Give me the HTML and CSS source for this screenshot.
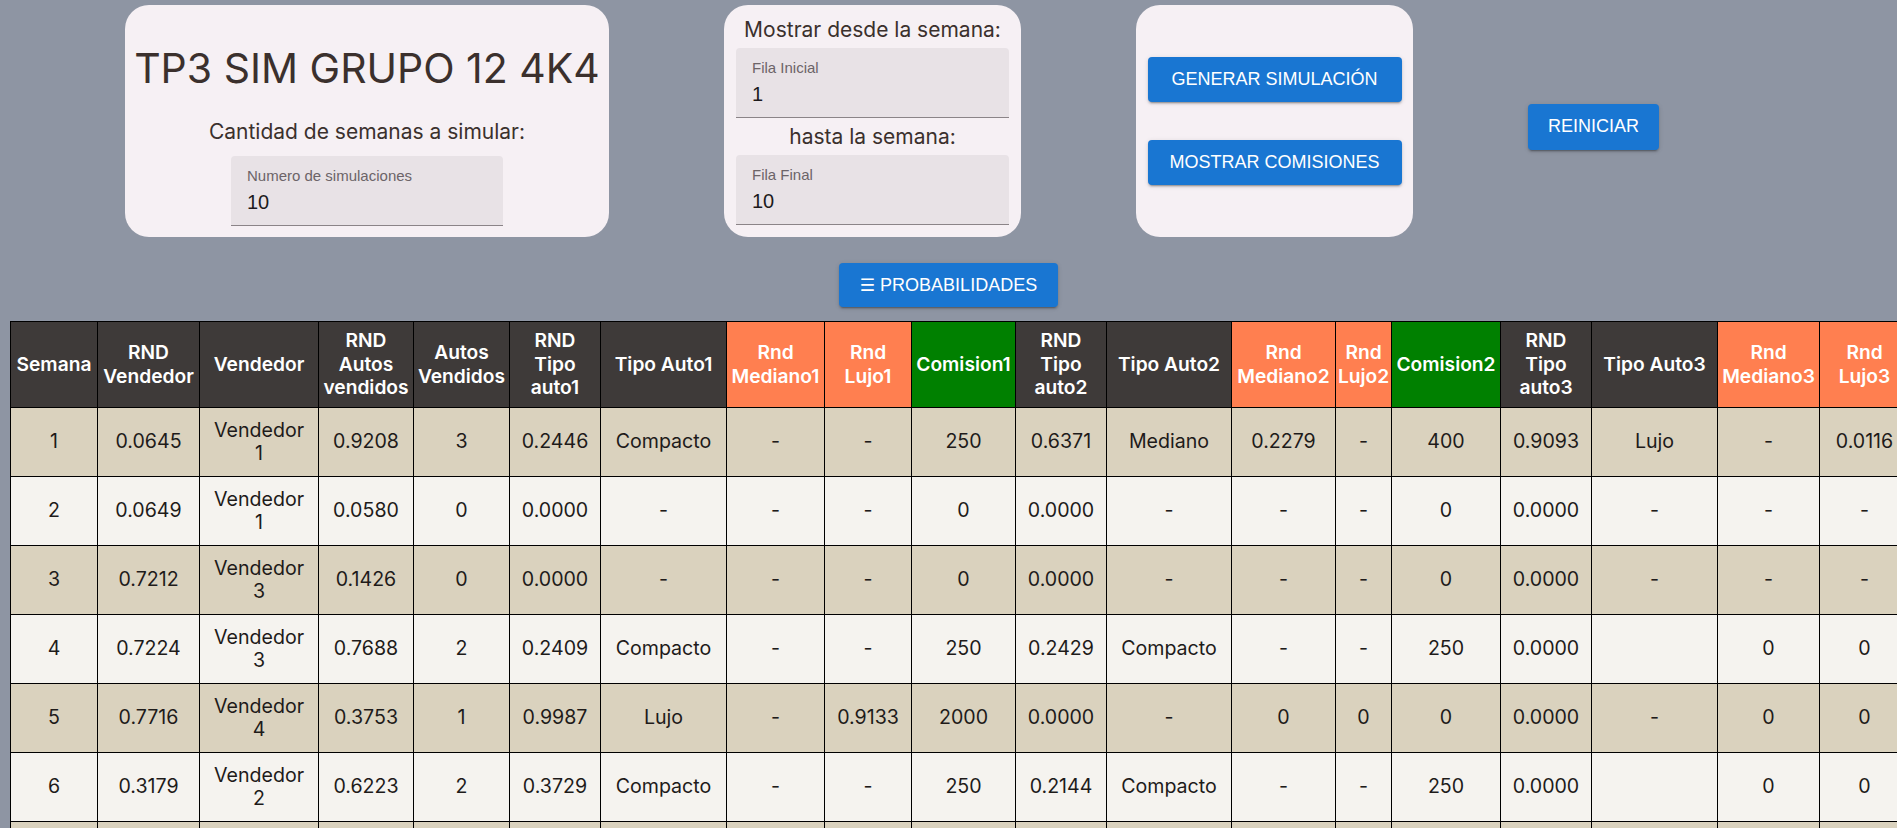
FILE: index.html
```html
<!DOCTYPE html>
<html lang="es">
<head>
<meta charset="utf-8">
<title>TP3 SIM GRUPO 12 4K4</title>
<link rel="stylesheet" href="styles.css">
</head>
<body>
<div class="top">
  <section class="card card-main">
    <h1 class="title">TP3 SIM GRUPO 12 4K4</h1>
    <p class="label label-sims">Cantidad de semanas a simular:</p>
    <div class="field field-sims">
      <span class="field-label">Numero de simulaciones</span>
      <span class="field-value">10</span>
    </div>
  </section>
  <section class="card card-range">
    <p class="label label-from">Mostrar desde la semana:</p>
    <div class="field">
      <span class="field-label">Fila Inicial</span>
      <span class="field-value">1</span>
    </div>
    <p class="label label-to">hasta la semana:</p>
    <div class="field">
      <span class="field-label">Fila Final</span>
      <span class="field-value">10</span>
    </div>
  </section>
  <section class="card card-actions">
    <button class="btn btn-wide">GENERAR SIMULACIÓN</button>
    <button class="btn btn-wide">MOSTRAR COMISIONES</button>
  </section>
  <div class="reset">
    <button class="btn btn-reset">REINICIAR</button>
  </div>
</div>
<div class="prob-row">
  <button class="btn btn-prob"><span class="menu-glyph">☰</span> PROBABILIDADES</button>
</div>
<div class="table-wrap">
  <table class="sim">
    <colgroup>
      <col class="w-sem"><col class="w-rndv"><col class="w-vend"><col class="w-rnda"><col class="w-autos">
      <col class="w-rndt"><col class="w-tipo"><col class="w-med1"><col class="w-luj1"><col class="w-com1">
      <col class="w-rndt"><col class="w-tipo2"><col class="w-med2"><col class="w-luj2"><col class="w-com2">
      <col class="w-rndt"><col class="w-tipo"><col class="w-med3"><col class="w-luj3"><col class="w-com3"><col class="w-tot">
    </colgroup>
    <thead>
      <tr class="head-row">
        <th>Semana</th>
        <th>RND<br>Vendedor</th>
        <th>Vendedor</th>
        <th>RND<br>Autos<br>vendidos</th>
        <th>Autos<br>Vendidos</th>
        <th>RND<br>Tipo<br>auto1</th>
        <th>Tipo Auto1</th>
        <th class="h-rnd">Rnd<br>Mediano1</th>
        <th class="h-rnd">Rnd<br>Lujo1</th>
        <th class="h-com">Comision1</th>
        <th>RND<br>Tipo<br>auto2</th>
        <th>Tipo Auto2</th>
        <th class="h-rnd">Rnd<br>Mediano2</th>
        <th class="h-rnd">Rnd<br>Lujo2</th>
        <th class="h-com">Comision2</th>
        <th>RND<br>Tipo<br>auto3</th>
        <th>Tipo Auto3</th>
        <th class="h-rnd">Rnd<br>Mediano3</th>
        <th class="h-rnd">Rnd<br>Lujo3</th>
        <th class="h-com">Comision3</th>
        <th class="h-com">Comision<br>Total</th>
      </tr>
    </thead>
    <tbody>
      <tr><td>1</td><td>0.0645</td><td>Vendedor 1</td><td>0.9208</td><td>3</td><td>0.2446</td><td>Compacto</td><td>-</td><td>-</td><td>250</td><td>0.6371</td><td>Mediano</td><td>0.2279</td><td>-</td><td>400</td><td>0.9093</td><td>Lujo</td><td>-</td><td>0.0116</td><td>1000</td><td>1650</td></tr>
      <tr><td>2</td><td>0.0649</td><td>Vendedor 1</td><td>0.0580</td><td>0</td><td>0.0000</td><td>-</td><td>-</td><td>-</td><td>0</td><td>0.0000</td><td>-</td><td>-</td><td>-</td><td>0</td><td>0.0000</td><td>-</td><td>-</td><td>-</td><td>0</td><td>0</td></tr>
      <tr><td>3</td><td>0.7212</td><td>Vendedor 3</td><td>0.1426</td><td>0</td><td>0.0000</td><td>-</td><td>-</td><td>-</td><td>0</td><td>0.0000</td><td>-</td><td>-</td><td>-</td><td>0</td><td>0.0000</td><td>-</td><td>-</td><td>-</td><td>0</td><td>0</td></tr>
      <tr><td>4</td><td>0.7224</td><td>Vendedor 3</td><td>0.7688</td><td>2</td><td>0.2409</td><td>Compacto</td><td>-</td><td>-</td><td>250</td><td>0.2429</td><td>Compacto</td><td>-</td><td>-</td><td>250</td><td>0.0000</td><td></td><td>0</td><td>0</td><td>0</td><td>500</td></tr>
      <tr><td>5</td><td>0.7716</td><td>Vendedor 4</td><td>0.3753</td><td>1</td><td>0.9987</td><td>Lujo</td><td>-</td><td>0.9133</td><td>2000</td><td>0.0000</td><td>-</td><td>0</td><td>0</td><td>0</td><td>0.0000</td><td>-</td><td>0</td><td>0</td><td>0</td><td>2000</td></tr>
      <tr><td>6</td><td>0.3179</td><td>Vendedor 2</td><td>0.6223</td><td>2</td><td>0.3729</td><td>Compacto</td><td>-</td><td>-</td><td>250</td><td>0.2144</td><td>Compacto</td><td>-</td><td>-</td><td>250</td><td>0.0000</td><td></td><td>0</td><td>0</td><td>0</td><td>500</td></tr>
      <tr><td>7</td><td>0.1534</td><td>Vendedor 1</td><td>0.4412</td><td>1</td><td>0.5120</td><td>Mediano</td><td>0.6634</td><td>-</td><td>400</td><td>0.0000</td><td>-</td><td>0</td><td>0</td><td>0</td><td>0.0000</td><td>-</td><td>0</td><td>0</td><td>0</td><td>400</td></tr>
      <tr><td>8</td><td>0.8841</td><td>Vendedor 4</td><td>0.2067</td><td>0</td><td>0.0000</td><td>-</td><td>-</td><td>-</td><td>0</td><td>0.0000</td><td>-</td><td>-</td><td>-</td><td>0</td><td>0.0000</td><td>-</td><td>-</td><td>-</td><td>0</td><td>0</td></tr>
      <tr><td>9</td><td>0.5398</td><td>Vendedor 3</td><td>0.8125</td><td>2</td><td>0.1187</td><td>Compacto</td><td>-</td><td>-</td><td>250</td><td>0.7712</td><td>Mediano</td><td>0.4461</td><td>-</td><td>400</td><td>0.0000</td><td></td><td>0</td><td>0</td><td>0</td><td>650</td></tr>
      <tr><td>10</td><td>0.2956</td><td>Vendedor 2</td><td>0.3310</td><td>1</td><td>0.4478</td><td>Compacto</td><td>-</td><td>-</td><td>250</td><td>0.0000</td><td>-</td><td>0</td><td>0</td><td>0</td><td>0.0000</td><td>-</td><td>0</td><td>0</td><td>0</td><td>250</td></tr>
    </tbody>
  </table>
</div>
</body>
</html>
```

FILE: styles.css
```css
html, body {
  margin: 0;
  padding: 0;
}

body {
  background: #8e95a3;
  font-family: Inter, "Noto Sans", sans-serif;
  color: #3b302d;
}

/* ---------- top controls ---------- */
.top {
  display: flex;
  align-items: center;
  gap: 115px;
  padding: 5px 0 0 125px;
}

.card {
  background: #f6f0f4;
  border-radius: 24px;
  height: 232px;
  box-sizing: border-box;
  display: flex;
  flex-direction: column;
  align-items: center;
}

.card-main {
  width: 484px;
  padding-top: 38px;
}

.title {
  margin: 0;
  font-size: 41px;
  font-weight: 400;
  line-height: 51px;
  color: #3b302d;
  white-space: nowrap;
}

.label {
  margin: 0;
  font-size: 21px;
  line-height: 26px;
  color: #3b302d;
  white-space: nowrap;
}

.label-sims {
  margin-top: 25px;
  margin-bottom: 11px;
}

.card-range {
  width: 297px;
  padding-top: 12px;
}

.label-from {
  margin-bottom: 5px;
}

.label-to {
  margin: 6px 0 5px;
}

.field {
  width: 273px;
  height: 70px;
  box-sizing: border-box;
  background: #e8e2e6;
  border-radius: 4px 4px 0 0;
  border-bottom: 1px solid #8b8488;
  padding: 11px 16px 0;
  display: flex;
  flex-direction: column;
  font-family: "Liberation Sans", Arial, sans-serif;
}

.field-sims {
  width: 272px;
}

.field-label {
  font-size: 15px;
  line-height: 18px;
  color: #6c6468;
}

.field-value {
  margin-top: 5px;
  font-size: 20px;
  line-height: 24px;
  color: #1d1a1c;
}

.card-actions {
  width: 277px;
  justify-content: center;
  gap: 38px;
}

/* ---------- buttons ---------- */
.btn {
  background: #1976d2;
  color: #fff;
  border: none;
  border-radius: 4px;
  font-family: "Liberation Sans", Arial, sans-serif;
  font-size: 18px;
  text-transform: uppercase;
  box-shadow: 0 3px 1px -2px rgba(0, 0, 0, 0.2), 0 2px 2px 0 rgba(0, 0, 0, 0.14), 0 1px 5px 0 rgba(0, 0, 0, 0.12);
  cursor: pointer;
  white-space: nowrap;
}

.btn-wide {
  width: 254px;
  height: 45px;
  padding: 0;
}

.btn-reset {
  height: 46px;
  padding: 0 20px;
  margin-top: 11px;
}

.prob-row {
  display: flex;
  justify-content: center;
  margin-top: 26px;
}

.btn-prob {
  height: 44px;
  padding: 0 21px;
}

.menu-glyph {
  font-family: "DejaVu Sans", sans-serif;
  font-size: 17px;
}

/* ---------- table ---------- */
.table-wrap {
  margin-top: 14px;
  padding-left: 10px;
  overflow: hidden;
}

.sim {
  border-collapse: collapse;
  table-layout: fixed;
  width: 2003px;
  font-size: 19.6px;
  line-height: 23.4px;
  text-align: center;
}

.sim th,
.sim td {
  border: 1px solid #000;
  vertical-align: middle;
}

.sim th {
  background: #3e3a39;
  color: #fff;
  font-weight: 600;
  font-size: 19.2px;
  padding: 0 2px;
  white-space: nowrap;
}

.sim th.h-rnd {
  background: #ff7f50;
}

.sim th.h-com {
  background: #008000;
}

.head-row {
  height: 86px;
}

.sim td {
  padding: 0 10px;
  height: 68px;
  color: #1e1b1a;
}

.sim tbody tr:nth-child(odd) td {
  background: #dad2be;
}

.sim tbody tr:nth-child(even) td {
  background: #f5f3ef;
}

.w-sem { width: 87px; }
.w-rndv { width: 102px; }
.w-vend { width: 119px; }
.w-rnda { width: 95px; }
.w-autos { width: 96px; }
.w-rndt { width: 91px; }
.w-tipo { width: 126px; }
.w-tipo2 { width: 125px; }
.w-med1 { width: 98px; }
.w-luj1 { width: 87px; }
.w-com1 { width: 104px; }
.w-med2 { width: 104px; }
.w-luj2 { width: 56px; }
.w-com2 { width: 109px; }
.w-med3 { width: 102px; }
.w-luj3 { width: 90px; }
.w-com3 { width: 104px; }
.w-tot { width: 110px; }
```
